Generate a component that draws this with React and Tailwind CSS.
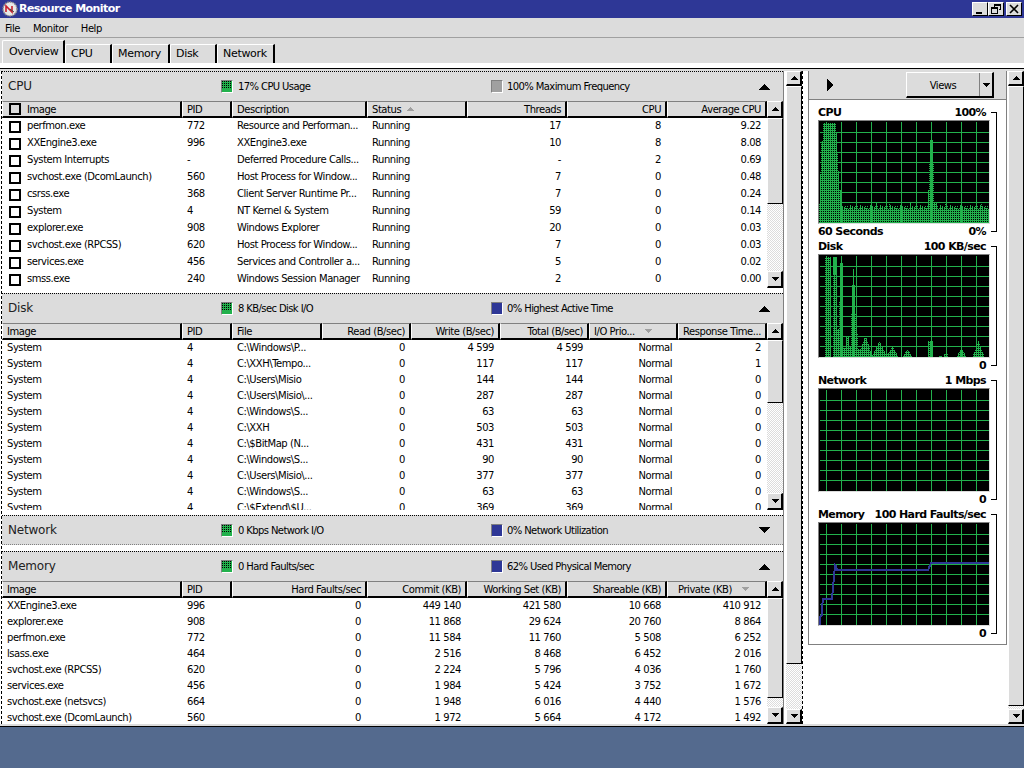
import React from "react";

const GREEN = "#22b14c";

function Swatch({ kind }) {
  const bg = kind === "blue" ? "bg-[#2e3796]" : kind === "gray" ? "bg-[#a0a0a0]" : "bg-[#22b14c]";
  return (
    <span className="w-[12px] h-[13px] border-b border-r border-b-white border-r-white border-t border-l border-t-[#808080] border-l-[#808080] flex shrink-0">
      <span className={`flex-1 ${bg}`}>
        {kind === "green" && (
          <svg width="10" height="11" shapeRendering="crispEdges" className="block">
            {[0, 2, 4, 6, 8].map((x) =>
              [0, 2, 4, 6].map((y) => <rect key={`${x}-${y}`} x={x} y={y} width="1" height="1" fill="#000" />)
            )}
          </svg>
        )}
      </span>
    </span>
  );
}

function Tri({ dir = "up", color = "#000", w = 10, h = 5 }) {
  return (
    <svg width={w} height={h} shapeRendering="crispEdges" className="shrink-0">
      <polygon points={dir === "up" ? `${w / 2},0 ${w},${h} 0,${h}` : `0,0 ${w},0 ${w / 2},${h}`} fill={color} />
    </svg>
  );
}

function ScrollBtn({ dir, tall }) {
  return (
    <div className={`${tall ? "h-[17px]" : "h-[15px]"} shrink-0 bg-[#dcdcdc] border-t border-l border-t-white border-l-white border-r-2 border-b-2 border-r-black border-b-black flex items-center justify-center`}>
      <Tri dir={dir} w={8} h={4} />
    </div>
  );
}

function Scrollbar({ thumb, tall }) {
  return (
    <div className="w-[16px] flex flex-col shrink-0">
      <ScrollBtn dir="up" tall={tall} />
      <div className={`${thumb} shrink-0 bg-[#dcdcdc] border-t border-l border-t-white border-l-white border-r border-b border-r-black border-b-black`} />
      <div className="flex-1 min-h-0 bg-[repeating-conic-gradient(#dcdcdc_0_25%,#ffffff_0_50%)] bg-[length:2px_2px]" />
      <ScrollBtn dir="down" tall={tall} />
    </div>
  );
}

function PanelHeader({ title, a, aKind, b, bKind, open = true, bottom }) {
  return (
    <div className={`h-[30px] shrink-0 bg-[#dcdcdc] border-t border-dotted border-t-black flex items-center ${bottom ? "border-b border-b-[#808080]" : ""}`}>
      <div className={`w-[219px] pl-[6px] ${bottom ? "" : "pb-[2px]"} text-[12px] text-[#222] tracking-[-0.2px]`}>{title}</div>
      <div className="w-[270px] flex items-center gap-[5px] text-[10px] tracking-[-0.6px]"><Swatch kind={aKind} /><span>{a}</span></div>
      <div className="flex-1 flex items-center gap-[4px] text-[10px] tracking-[-0.6px]"><Swatch kind={bKind} /><span>{b}</span></div>
      <div className="w-[24px] flex justify-start"><Tri dir={open ? "up" : "down"} w={11} h={6} /></div>
    </div>
  );
}

function Head({ cols, template }) {
  return (
    <div className={`grid ${template} h-[17px] shrink-0`}>
      {cols.map((c) => (
        <div
          key={c.t}
          className={`bg-[#dcdcdc] border-t border-t-[#808080] border-b-2 border-b-black border-r-2 border-r-black border-l border-l-white flex items-center text-[10px] overflow-hidden whitespace-nowrap ${c.r ? "justify-end pr-[4px]" : c.c ? "pl-[10px]" : "pl-[4px]"}`}
        >
          {c.check && <span className="w-[12px] h-[12px] border-2 border-black bg-[#dcdcdc] ml-[2px] mr-[6px] shrink-0" />}
          <span>{c.t}</span>
          {c.sort && <span className={c.sml || "ml-[10px]"}><Tri dir={c.sort} color="#a0a0a0" w={7} h={4} /></span>}
        </div>
      ))}
    </div>
  );
}

function Rows({ rows, template, align, rowH, check }) {
  return rows.map((r, i) => (
    <div key={i} className={`grid ${template} ${rowH} shrink-0 items-center text-[10px] whitespace-nowrap`}>
      {r.map((v, j) => (
        <div key={j} className={`overflow-hidden flex items-center ${align[j] ? "justify-end pr-[6px]" : "pl-[5px]"}`}>
          {j === 0 && check && <span className="w-[12px] h-[12px] border-2 border-black bg-white ml-[2px] mr-[6px] shrink-0" />}
          <span className="-translate-y-[1px]">{v}</span>
        </div>
      ))}
    </div>
  ));
}

const cpuT = "grid-cols-[180px_50px_135px_100px_100px_100px_100px]";
const diskT = "grid-cols-[180px_50px_90px_89px_89px_89px_89px_89px]";
const memT = "grid-cols-[180px_50px_135px_100px_100px_100px_100px]";

const cpuRows = [
  ["perfmon.exe", "772", "Resource and Performan...", "Running", "17", "8", "9.22"],
  ["XXEngine3.exe", "996", "XXEngine3.exe", "Running", "10", "8", "8.08"],
  ["System Interrupts", "-", "Deferred Procedure Calls...", "Running", "-", "2", "0.69"],
  ["svchost.exe (DcomLaunch)", "560", "Host Process for Window...", "Running", "7", "0", "0.48"],
  ["csrss.exe", "368", "Client Server Runtime Pr...", "Running", "7", "0", "0.24"],
  ["System", "4", "NT Kernel & System", "Running", "59", "0", "0.14"],
  ["explorer.exe", "908", "Windows Explorer", "Running", "20", "0", "0.03"],
  ["svchost.exe (RPCSS)", "620", "Host Process for Window...", "Running", "7", "0", "0.03"],
  ["services.exe", "456", "Services and Controller a...", "Running", "5", "0", "0.02"],
  ["smss.exe", "240", "Windows Session Manager", "Running", "2", "0", "0.00"],
];
const diskRows = [
  ["C:\\Windows\\P...", "0", "4 599", "4 599", "Normal", "2"],
  ["C:\\XXH\\Tempo...", "0", "117", "117", "Normal", "1"],
  ["C:\\Users\\Misio", "0", "144", "144", "Normal", "0"],
  ["C:\\Users\\Misio\\...", "0", "287", "287", "Normal", "0"],
  ["C:\\Windows\\S...", "0", "63", "63", "Normal", "0"],
  ["C:\\XXH", "0", "503", "503", "Normal", "0"],
  ["C:\\$BitMap (N...", "0", "431", "431", "Normal", "0"],
  ["C:\\Windows\\S...", "0", "90", "90", "Normal", "0"],
  ["C:\\Users\\Misio\\...", "0", "377", "377", "Normal", "0"],
  ["C:\\Windows\\S...", "0", "63", "63", "Normal", "0"],
  ["C:\\$Extend\\$U...", "0", "369", "369", "Normal", "0"],
].map((r) => ["System", "4", ...r]);
const memRows = [
  ["XXEngine3.exe", "996", "0", "449 140", "421 580", "10 668", "410 912"],
  ["explorer.exe", "908", "0", "11 868", "29 624", "20 760", "8 864"],
  ["perfmon.exe", "772", "0", "11 584", "11 760", "5 508", "6 252"],
  ["lsass.exe", "464", "0", "2 516", "8 468", "6 452", "2 016"],
  ["svchost.exe (RPCSS)", "620", "0", "2 224", "5 796", "4 036", "1 760"],
  ["services.exe", "456", "0", "1 984", "5 424", "3 752", "1 672"],
  ["svchost.exe (netsvcs)", "664", "0", "1 948", "6 016", "4 440", "1 576"],
  ["svchost.exe (DcomLaunch)", "560", "0", "1 972", "5 664", "4 172", "1 492"],
];

function Grid() {
  const v = [7, 22, 37, 52, 67, 82, 97, 112, 127, 142, 157];
  const h = [11, 21, 31, 41, 51, 61, 71, 81, 91];
  return (
    <g fill={GREEN}>
      {v.map((x) => <rect key={x} x={x} y="1" width="1" height="101" />)}
      {h.map((y) => <rect key={y} x="1" y={y} width="169" height="1" />)}
    </g>
  );
}

function Bars({ bars, id }) {
  return (
    <>
      <defs>
        <pattern id={id} width="2" height="2" patternUnits="userSpaceOnUse">
          <rect width="2" height="2" fill={GREEN} />
          <rect x="0" y="0" width="1" height="1" fill="#000" />
        </pattern>
      </defs>
      {bars.map(([x0, x1, h, solid], i) => (
        <rect key={i} x={x0 - 1} y={102 - h} width={x1 - x0} height={h} fill={solid ? GREEN : `url(#${id})`} />
      ))}
    </>
  );
}

function Chart({ id, bars = [], line }) {
  return (
    <div className="w-[172px] h-[104px] border border-t-[#808080] border-l-[#808080] border-r-[#dcdcdc] border-b-[#dcdcdc] shrink-0 bg-black">
      <svg width="170" height="102" shapeRendering="crispEdges" className="block">
        <rect width="170" height="102" fill="#000" />
        <Bars bars={bars} id={id} />
        <Grid />
        {line && <polyline points={line} fill="none" stroke="#2e3796" strokeWidth="2" />}
      </svg>
    </div>
  );
}

const cpuNoise = [];
for (let x = 24; x < 172; x++) {
  let h = 14 + ((x * 7) % 5);
  if ([58, 71, 92, 127, 143, 163].includes(x)) h = 21;
  if (x > 110 && x < 119) h = 20;
  cpuNoise.push([x, x + 1, h]);
}
const cpuBars = [
  [1, 2, 19], [2, 3, 49], [3, 5, 82], [5, 18, 100], [18, 19, 91], [19, 20, 69], [20, 21, 52], [21, 23, 33], [23, 24, 22],
  ...cpuNoise,
  [110, 111, 33], [115, 116, 33],
  [112, 115, 83, true],
  [111, 116, 59],
];

const tri = (c, w, p) => {
  const out = [];
  for (let x = c - w; x <= c + w; x++) out.push([x, x + 1, Math.max(1, Math.round(p * (1 - Math.abs(x - c) / (w + 1))))]);
  return out;
};
const diskBars = [
  [7, 13, 100], [15, 19, 100, true], [15, 19, 83], [19, 21, 28], [21, 25, 56], [22, 25, 94, true], [25, 28, 9], [28, 31, 21], [31, 33, 10],
  [33, 38, 44], [34, 37, 72, true], [35, 36, 88, true], [38, 40, 24], [40, 43, 8],
  ...tri(47, 6, 22), ...tri(61, 7, 16), [67, 70, 3], ...tri(74, 5, 11), ...tri(89, 4, 8),
  [110, 115, 16], [121, 124, 1], [126, 130, 3], ...tri(143, 4, 9), ...tri(160, 5, 16),
];
const memLine = "1,102 1,94 3,92 3,85 4,76 13,76 14,64 15,54 16,42 17,43 18,47 109,47 112,40 170,40";

function GraphBlock({ label, rightTop, bottomL, bottomR, children }) {
  return (
    <div className="flex">
      <div className="w-[172px] flex flex-col">
        <div className="h-[15px] pt-[1px] flex justify-between items-center text-[11px] font-bold tracking-[-0.6px] whitespace-nowrap">
          <span>{label}</span>
          <span className="mr-[4px]">{rightTop}</span>
        </div>
        {children}
        <div className="h-[15px] pt-[2px] flex justify-between items-center text-[11px] font-bold tracking-[-0.6px] whitespace-nowrap">
          <span>{bottomL}</span>
          <span className="mr-[4px]">{bottomR}</span>
        </div>
      </div>
      <div className="w-[6px] ml-[1px] my-[7px] border-t border-r border-b border-black" />
    </div>
  );
}

function Logo() {
  return (
    <svg width="16" height="16" viewBox="0 0 16 16">
      <circle cx="8" cy="8" r="7" fill="#e8e8e8" stroke="#8a8a8a" strokeWidth="1.5" strokeDasharray="1.5 1" />
      <path d="M4 11V5l6 6V5" fill="none" stroke="#c8202c" strokeWidth="1.6" />
      <path d="M8 8 L12 11" stroke="#444" strokeWidth="1" />
    </svg>
  );
}

function WinBtn({ children }) {
  return (
    <div className="w-[16px] h-[14px] bg-[#dcdcdc] border-t border-l border-t-white border-l-white border-r border-b border-r-black border-b-black flex items-center justify-center">
      {children}
    </div>
  );
}

function Tab({ label, active, w }) {
  return (
    <div className={`${w} ${active ? "h-[23px] pt-[1px] pl-[6px]" : "h-[19px] pl-[5px]"} bg-[#dcdcdc] border-t border-l border-t-white border-l-white border-r-2 border-r-black rounded-tl-[2px] flex items-center text-[11px] tracking-[-0.3px] shrink-0`}>
      {label}
    </div>
  );
}

export default function App() {
  const cpuCols = [
    { t: "Image", check: true }, { t: "PID" }, { t: "Description" }, { t: "Status", sort: "up", sml: "ml-[6px]" },
    { t: "Threads", r: true }, { t: "CPU", r: true }, { t: "Average CPU", r: true },
  ];
  const diskCols = [
    { t: "Image" }, { t: "PID" }, { t: "File" }, { t: "Read (B/sec)", r: true }, { t: "Write (B/sec)", r: true },
    { t: "Total (B/sec)", r: true }, { t: "I/O Prio...", sort: "down" }, { t: "Response Time...", r: true },
  ];
  const memCols = [
    { t: "Image" }, { t: "PID" }, { t: "Hard Faults/sec", r: true }, { t: "Commit (KB)", r: true }, { t: "Working Set (KB)", r: true },
    { t: "Shareable (KB)", r: true }, { t: "Private (KB)", c: true, sort: "down" },
  ];
  return (
    <div className="w-[1024px] h-[768px] flex flex-col bg-[#546a8e] text-black overflow-hidden font-['DejaVu_Sans',sans-serif] tracking-[-0.45px]">
      <div className="h-[18px] shrink-0 bg-[#2e3796] flex items-center pl-[2px] pr-[2px]">
        <Logo />
        <span className="text-white text-[11px] font-bold flex-1 ml-[1px] tracking-[-0.55px]">Resource Monitor</span>
        <WinBtn><span className="w-[6px] h-[2px] bg-black mt-[7px] -ml-[2px]" /></WinBtn>
        <WinBtn>
          <svg width="10" height="10" shapeRendering="crispEdges" fill="none" stroke="#000"><path d="M3.5 2.5V.5h6v5h-2" /><path d="M3 1.5h6" /><rect x=".5" y="3.5" width="6" height="6" /><path d="M1 4.5h5" /></svg>
        </WinBtn>
        <span className="w-[2px]" />
        <WinBtn>
          <svg width="10" height="10" stroke="#000" strokeWidth="1.6"><path d="M1 1l8 8M9 1l-8 8" /></svg>
        </WinBtn>
      </div>
      <div className="h-[20px] shrink-0 bg-[#dcdcdc] border-b border-b-[#a0a0a0] flex items-center pt-[1px] pl-[5px] gap-[13px] text-[10px]">
        <span>File</span><span>Monitor</span><span>Help</span>
      </div>
      <div className="h-[25px] shrink-0 bg-[#dcdcdc] flex items-end pl-[2px]">
        <Tab label="Overview" active w="w-[63px]" />
        <Tab label="CPU" w="w-[47px]" />
        <Tab label="Memory" w="w-[58px]" />
        <Tab label="Disk" w="w-[47px]" />
        <Tab label="Network" w="w-[58px]" />
      </div>
      <div className="h-[661px] shrink-0 bg-white pt-[5px]">
        <div className="h-[1px] bg-black" />
        <div className="h-[2px] bg-[#dcdcdc]" />
        <div className="h-[653px] flex">
          <div className="w-[782px] ml-[1px] border-l border-dashed border-l-black flex flex-col shrink-0">
            <PanelHeader title="CPU" a="17% CPU Usage" aKind="green" b="100% Maximum Frequency" bKind="gray" />
            <div className="flex h-[187px] shrink-0">
              <div className="w-[765px] flex flex-col overflow-hidden">
                <Head cols={cpuCols} template={cpuT} />
                <Rows rows={cpuRows} template={cpuT} align={[0, 0, 0, 0, 1, 1, 1]} rowH="h-[17px]" check />
              </div>
              <Scrollbar thumb="h-[86px]" tall />
            </div>
            <div className="h-[5px] shrink-0" />
            <PanelHeader title="Disk" a="8 KB/sec Disk I/O" aKind="green" b="0% Highest Active Time" bKind="blue" />
            <div className="flex h-[187px] shrink-0">
              <div className="w-[765px] flex flex-col overflow-hidden">
                <Head cols={diskCols} template={diskT} />
                <Rows rows={diskRows} template={diskT} align={[0, 0, 0, 1, 1, 1, 1, 1]} rowH="h-[16px]" />
              </div>
              <Scrollbar thumb="h-[63px]" tall />
            </div>
            <div className="h-[5px] shrink-0" />
            <PanelHeader title="Network" a="0 Kbps Network I/O" aKind="green" b="0% Network Utilization" bKind="blue" open={false} bottom />
            <div className="h-[6px] shrink-0" />
            <PanelHeader title="Memory" a="0 Hard Faults/sec" aKind="green" b="62% Used Physical Memory" bKind="blue" />
            <div className="flex flex-1 min-h-0">
              <div className="w-[765px] flex flex-col overflow-hidden">
                <Head cols={memCols} template={memT} />
                <Rows rows={memRows} template={memT} align={[0, 0, 1, 1, 1, 1, 1]} rowH="h-[16px]" />
              </div>
              <Scrollbar thumb="h-[100px]" tall />
            </div>
          </div>
          <div className="w-[3px] shrink-0 border-l border-l-[#808080]" />
          <Scrollbar thumb="h-[578px]" />
          <div className="w-[1px] border-r border-dashed border-r-black shrink-0" />
          <div className="flex-1 flex pl-[5px]">
            <div className="w-[199px] h-[574px] shrink-0 flex flex-col border border-[#808080] border-t-0 mr-[1px]">
              <div className="h-[29px] shrink-0 bg-[#dcdcdc] border-b border-b-[#808080] flex items-center pl-[18px]">
                <svg width="7" height="12" shapeRendering="crispEdges"><polygon points="0,0 7,6 0,12" fill="#000" /></svg>
                <div className="ml-[72px] flex h-[26px] border-b-2 border-r-2 border-b-black border-r-black border-t border-l border-t-white border-l-white">
                  <div className="w-[73px] flex items-center justify-center pt-[1px] text-[10px] border-r border-r-[#808080]">Views</div>
                  <div className="w-[12px] flex items-center justify-center"><Tri dir="down" w={7} h={4} /></div>
                </div>
              </div>
              <div className="pl-[9px] pt-[5px] flex flex-col">
                <GraphBlock label="CPU" rightTop="100%" bottomL="60 Seconds" bottomR="0%"><Chart id="c1" bars={cpuBars} /></GraphBlock>
                <GraphBlock label="Disk" rightTop="100 KB/sec" bottomR="0"><Chart id="c2" bars={diskBars} /></GraphBlock>
                <GraphBlock label="Network" rightTop="1 Mbps" bottomR="0"><Chart id="c3" /></GraphBlock>
                <GraphBlock label="Memory" rightTop="100 Hard Faults/sec" bottomR="0"><Chart id="c4" line={memLine} /></GraphBlock>
              </div>
            </div>
            <Scrollbar thumb="h-[620px]" />
          </div>
        </div>
      </div>
      <div className="h-[2px] bg-[#dcdcdc] shrink-0" />
      <div className="h-[1px] bg-black shrink-0" />
    </div>
  );
}
